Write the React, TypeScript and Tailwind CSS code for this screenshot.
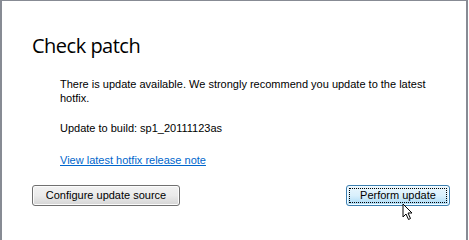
import React from "react";

export default function App() {
  return (
    <div className="w-[469px] h-[240px] bg-white overflow-hidden">
      <div className="w-[468px] h-[260px] border-t border-l-2 border-r-2 border-[#878b94] bg-white relative">
        <div className="pl-[30px] pt-[30px]">
          <h1 className="text-[20px] leading-[30px] text-black font-['Open_Sans',sans-serif] tracking-[-0.5px]">
            Check patch
          </h1>
          <div className="pl-[28px] pt-[16px] text-[11px] leading-[14px] text-black font-['Liberation_Sans',sans-serif] w-[400px]">
            <p>There is update available. We strongly recommend you update to the latest hotfix.</p>
            <p className="mt-[16px]">Update to build: sp1_20111123as</p>
            <p className="mt-[18px]">
              <a href="#" className="text-[#0066cc] underline">View latest hotfix release note</a>
            </p>
          </div>
          <div className="flex justify-between w-[418px] mt-[18px]">
            <button className="w-[148px] h-[21px] rounded-[3px] border border-[#707070] bg-gradient-to-b from-[#f2f2f2] via-[#ebebeb] to-[#d5d5d5] text-[11px] text-black font-['Liberation_Sans',sans-serif] shadow-[inset_0_0_0_1px_#fcfcfc]">
              Configure update source
            </button>
            <button className="w-[104px] h-[21px] rounded-[3px] border border-[#3c7fb1] bg-gradient-to-b from-[#eaf6fd] via-[#d9f0fc] to-[#a7d9f5] text-[11px] text-black font-['Liberation_Sans',sans-serif] p-[2px] shadow-[inset_0_0_0_1px_#f4fbfe]">
              <span className="flex items-center justify-center w-full h-full border border-dotted border-black">Perform update</span>
            </button>
          </div>
        </div>
        <svg className="absolute left-[400px] top-[202px]" width="14" height="18" viewBox="0 0 14 18">
          <path d="M1 1 L1 14 L4 11 L6.5 16.5 L8.5 15.5 L6 10 L10 10 Z" fill="white" stroke="black" strokeWidth="1" strokeLinejoin="miter" />
        </svg>
      </div>
    </div>
  );
}
